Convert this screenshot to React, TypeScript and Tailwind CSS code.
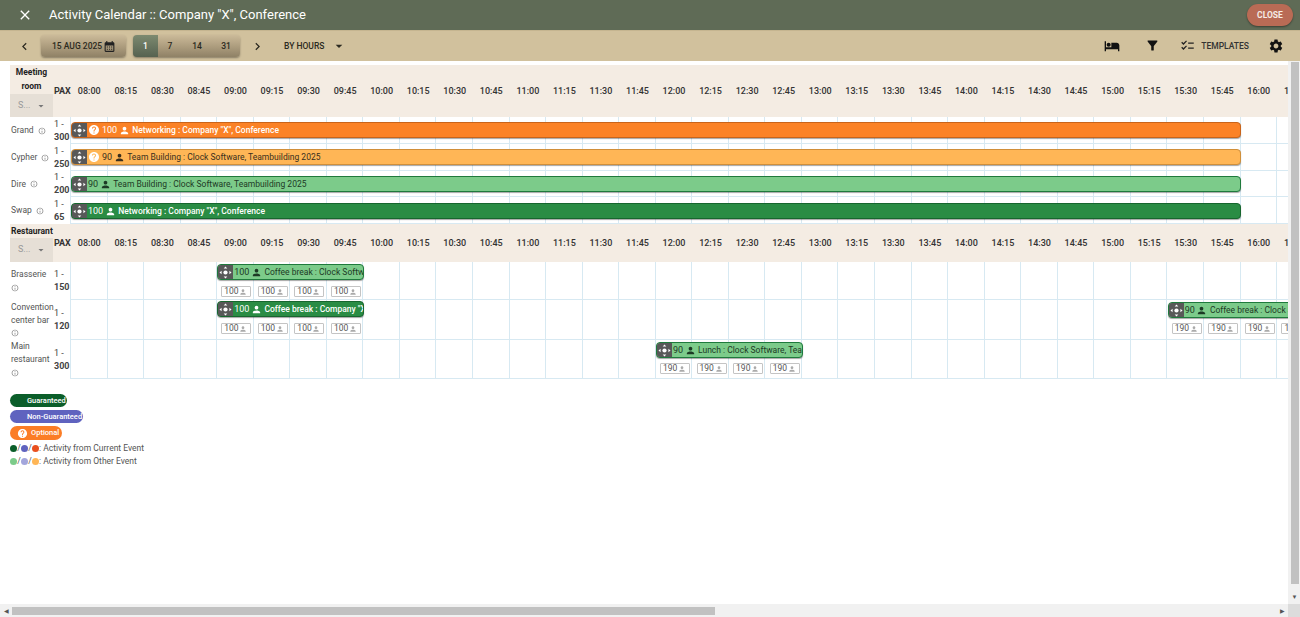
import React from 'react';
import {
  MdArrowDropDown,
  MdCalendarMonth,
  MdChecklist,
  MdChevronLeft,
  MdChevronRight,
  MdClose,
  MdFilterAlt,
  MdHelp,
  MdHotel,
  MdInfoOutline,
  MdPerson,
  MdSettings,
} from 'react-icons/md';

const SLOT = 36.56;
const times = Array.from({ length: 34 }, (_, i) => {
  const mins = 8 * 60 + i * 15;
  return `${String(Math.floor(mins / 60)).padStart(2, '0')}:${String(mins % 60).padStart(2, '0')}`;
});

type Bar = {
  start: number;
  span: number;
  top: number;
  pax: number;
  label: string;
  tone: 'orange' | 'amber' | 'light' | 'dark';
  optional?: boolean;
  boxes?: number;
  boxTop?: number;
};

type Room = { name: string; pax: string; height: string; bars: Bar[]; wrap?: boolean };

const meetingRooms: Room[] = [
  { name: 'Grand', pax: '300', height: 'h-[27px]', bars: [{ start: 0, span: 32, top: 5, pax: 100, label: 'Networking : Company "X", Conference', tone: 'orange', optional: true }] },
  { name: 'Cypher', pax: '250', height: 'h-[27px]', bars: [{ start: 0, span: 32, top: 5, pax: 90, label: 'Team Building : Clock Software, Teambuilding 2025', tone: 'amber', optional: true }] },
  { name: 'Dire', pax: '200', height: 'h-[26px]', bars: [{ start: 0, span: 32, top: 5, pax: 90, label: 'Team Building : Clock Software, Teambuilding 2025', tone: 'light' }] },
  { name: 'Swap', pax: '65', height: 'h-[27px]', bars: [{ start: 0, span: 32, top: 6, pax: 100, label: 'Networking : Company "X", Conference', tone: 'dark' }] },
];

const restaurants: Room[] = [
  { name: 'Brasserie', wrap: true, pax: '150', height: 'h-[38px]', bars: [{ start: 4, span: 4, top: 2, pax: 100, label: 'Coffee break : Clock Software, Teambuilding 2025', tone: 'light', boxes: 100, boxTop: 24 }] },
  {
    name: 'Convention center bar', wrap: true, pax: '120', height: 'h-[40px]',
    bars: [
      { start: 4, span: 4, top: 1, pax: 100, label: 'Coffee break : Company "X", Conference', tone: 'dark', boxes: 100, boxTop: 23 },
      { start: 30, span: 4, top: 2, pax: 90, label: 'Coffee break : Clock Software, Teambuilding 2025', tone: 'light', boxes: 190, boxTop: 23 },
    ],
  },
  { name: 'Main restaurant', wrap: true, pax: '300', height: 'h-[39px]', bars: [{ start: 16, span: 4, top: 2, pax: 90, label: 'Lunch : Clock Software, Teambuilding 2025', tone: 'light', boxes: 190, boxTop: 23 }] },
];

const tones = {
  orange: 'bg-[#fb8226] border-[#c9641a] text-white font-medium',
  amber: 'bg-[#ffb656] border-[#d08f3a] text-[#3a2f1d]',
  light: 'bg-[#7ccb8a] border-[#1f7a3c] text-[#1d3a25]',
  dark: 'bg-[#2a8c44] border-[#17662e] text-white font-medium',
};

function MoveIcon() {
  return (
    <svg viewBox="0 0 16 16" className="w-[13px] h-[13px]" fill="#fff">
      <circle cx="8" cy="8" r="2.6" />
      <path d="M8 0.6 10.2 3.2H5.8ZM8 15.4 5.8 12.8H10.2ZM0.6 8 3.2 5.8V10.2ZM15.4 8 12.8 10.2V5.8Z" />
    </svg>
  );
}

function EventBar({ bar }: { bar: Bar }) {
  return (
    <>
      <div
        className={`absolute z-10 h-[16px] flex items-center rounded-[4px] border overflow-hidden whitespace-nowrap text-[8.5px] shadow-[0_1px_1px_rgba(0,0,0,0.35)] ${tones[bar.tone]}`}
        style={{ left: bar.start * SLOT, width: bar.span * SLOT + 0.5, top: bar.top }}
      >
        <span className="w-[15px] h-full shrink-0 bg-[#585858] flex items-center justify-center">
          <MoveIcon />
        </span>
        {bar.optional && <MdHelp className="ml-[1px] w-[12px] h-[12px] shrink-0 text-white" />}
        <span className={`text-[9px] pt-[1px] font-normal ${bar.optional ? 'ml-[2px]' : 'ml-[1px]'}`}>{bar.pax}</span>
        <MdPerson className="mx-[1.5px] w-[11px] h-[11px] shrink-0" />
        <span className="ml-[1px]">{bar.label}</span>
      </div>
      {bar.boxes &&
        Array.from({ length: bar.span }, (_, i) => (
          <div
            key={i}
            className="absolute z-10 w-[30px] h-[11px] flex items-center justify-between pl-[2px] pr-[3px] bg-white border border-[#c4c4c4] rounded-[1px] text-[8.5px] leading-none text-[#555]"
            style={{ left: (bar.start + i) * SLOT + 4, top: bar.boxTop }}
          >
            <span>{bar.boxes}</span>
            <MdPerson className="w-[8px] h-[8px] text-[#aaa]" />
          </div>
        ))}
    </>
  );
}

function RoomRow({ room }: { room: Room }) {
  return (
    <div className={`flex ${room.height}`}>
      <div className="w-[43px] shrink-0 pl-[1px] text-[8.5px] leading-[13px] text-[#555] flex items-center">
        <div>
          {room.wrap ? (
            <>
              {room.name}
              <div className="leading-[13px]">
                <MdInfoOutline className="inline w-[8px] h-[8px] text-[#777]" />
              </div>
            </>
          ) : (
            <span className="flex items-center gap-[4px]">
              {room.name}
              <MdInfoOutline className="w-[8px] h-[8px] text-[#777]" />
            </span>
          )}
        </div>
      </div>
      <div className="w-[17px] shrink-0 pl-[1px] text-[9px] leading-[13px] text-[#444] flex flex-col justify-center">
        <div>1 -</div>
        <div className="font-bold">{room.pax}</div>
      </div>
      <div className="relative flex flex-1 border-b border-[#d7e9f2] border-l">
        {times.map((t) => (
          <div key={t} className="w-[36.56px] shrink-0 border-r border-[#d7e9f2]" />
        ))}
        {room.bars.map((bar) => (
          <EventBar key={bar.start} bar={bar} />
        ))}
      </div>
    </div>
  );
}

function HeaderRow({ title, tall }: { title: string; tall?: boolean }) {
  return (
    <div className={`flex bg-[#f4ece3] ${tall ? 'h-[52px]' : 'h-[38px]'}`}>
      <div className="w-[43px] shrink-0 flex flex-col justify-end">
        <div className={`text-[8.5px] font-bold text-[#222] ${tall ? 'text-center leading-[14px] mb-[1px]' : 'pl-[1px] leading-[14px]'}`}>{title}</div>
        <div className="h-[24px] bg-[#e6dfd6] flex items-center pl-[8px] gap-[5px] text-[9px] text-[#999]">
          <span>S...</span>
          <MdArrowDropDown className="w-[12px] h-[12px] text-[#777]" />
        </div>
      </div>
      <div className="w-[18px] shrink-0 self-center pl-[1px] pt-[1px] text-[9px] font-bold text-[#333]">PAX</div>
      <div className="flex">
        {times.map((t) => (
          <div key={t} className="w-[36.56px] shrink-0 self-center pt-[1px] text-center text-[9px] font-medium text-[#333]">
            {t}
          </div>
        ))}
      </div>
    </div>
  );
}

function Dots({ colors }: { colors: string[] }) {
  return (
    <span className="flex items-center">
      {colors.map((c, i) => (
        <React.Fragment key={c}>
          {i > 0 && <span className="w-[4px] text-center">/</span>}
          <span className={`w-[7px] h-[7px] rounded-full ${c}`} />
        </React.Fragment>
      ))}
    </span>
  );
}

export default function App() {
  return (
    <div className="w-[1300px] h-[617px] overflow-hidden flex flex-col bg-white font-['Roboto',sans-serif]">
      <div className="h-[30px] shrink-0 bg-[#5f6b56] flex items-center text-white">
        <MdClose className="ml-[17px] w-[16px] h-[16px]" />
        <div className="ml-[16px] text-[13px]">Activity Calendar :: Company "X", Conference</div>
        <button className="ml-auto mr-[7px] w-[46px] h-[22px] rounded-full bg-[#b96b55] text-[8.5px] font-bold text-[#f6ece6] shadow-[0_1px_2px_rgba(0,0,0,0.4)]">
          CLOSE
        </button>
      </div>
      <div className="h-[31px] shrink-0 bg-[#d1c19d] flex items-center text-[#2c2a20] border-t border-[#c5b590]">
        <MdChevronLeft className="ml-[17px] w-[15px] h-[15px]" />
        <div className="ml-[9px] w-[85px] h-[22px] rounded-[4px] bg-gradient-to-b from-[#cbba99] via-[#ae9e7f] to-[#8f8166] shadow-[0_1px_2px_rgba(0,0,0,0.35)] flex items-center pl-[11px] text-[8.5px] font-medium whitespace-nowrap">
          15 AUG 2025
          <MdCalendarMonth className="ml-[1px] w-[13px] h-[13px] text-[#222]" />
        </div>
        <div className="ml-[7px] flex h-[22px] rounded-[4px] overflow-hidden shadow-[0_1px_2px_rgba(0,0,0,0.35)] text-[8.5px] font-medium bg-gradient-to-b from-[#cbba99] via-[#ae9e7f] to-[#8f8166]">
          <div className="w-[25px] flex items-center justify-center text-white bg-gradient-to-b from-[#7d8a70] to-[#566250]">1</div>
          <div className="w-[24px] flex items-center justify-center">7</div>
          <div className="w-[30px] flex items-center justify-center">14</div>
          <div className="w-[28px] flex items-center justify-center">31</div>
        </div>
        <MdChevronRight className="ml-[10px] w-[15px] h-[15px]" />
        <div className="ml-[19px] text-[8.5px] font-medium">BY HOURS</div>
        <MdArrowDropDown className="ml-[7px] w-[16px] h-[16px]" />
        <MdHotel className="ml-auto mb-[1px] w-[16px] h-[16px] text-[#111]" />
        <MdFilterAlt className="ml-[25px] mb-[1px] w-[15px] h-[15px] text-[#111]" />
        <MdChecklist className="ml-[20px] mb-[1px] w-[15px] h-[15px] text-[#222]" />
        <span className="ml-[6px] text-[8.5px] font-medium text-[#333]">TEMPLATES</span>
        <MdSettings className="ml-[19px] mr-[16px] mb-[1px] w-[16px] h-[16px] text-[#111]" />
      </div>
      <div className="flex-1 flex min-h-0">
        <div className="flex-1 min-w-0 pl-[10px] pt-[4px] overflow-hidden">
          <HeaderRow title="Meeting room" tall />
          {meetingRooms.map((r) => (
            <RoomRow key={r.name} room={r} />
          ))}
          <HeaderRow title="Restaurant" />
          {restaurants.map((r) => (
            <RoomRow key={r.name} room={r} />
          ))}
          <div className="mt-[15px] flex flex-col items-start gap-[3px] text-[7.5px] font-medium text-white">
            <div className="w-[57px] h-[13px] rounded-full bg-[#0b5e2a] flex items-center pl-[17px]">Guaranteed</div>
            <div className="w-[73px] h-[13px] rounded-full bg-[#5f63bf] flex items-center pl-[17px] whitespace-nowrap">Non-Guaranteed</div>
            <div className="w-[52px] h-[14px] rounded-full bg-[#fb7d26] flex items-center pl-[7px] gap-[3px]">
              <MdHelp className="w-[11px] h-[11px]" />
              Optional
            </div>
          </div>
          <div className="mt-[2px] text-[8.5px] leading-[13px] text-[#555]">
            <div className="flex items-center">
              <Dots colors={['bg-[#0b5e2a]', 'bg-[#5f63bf]', 'bg-[#e9501f]']} />
              <span>: Activity from Current Event</span>
            </div>
            <div className="flex items-center">
              <Dots colors={['bg-[#7ccb8a]', 'bg-[#a3a6dc]', 'bg-[#ffb656]']} />
              <span>: Activity from Other Event</span>
            </div>
          </div>
        </div>
        <div className="w-[12px] shrink-0 bg-[#f1f1f1] flex flex-col items-center pl-[1px]">
          <div className="w-[8px] h-[522px] mt-[1px] bg-[#c1c1c1]" />
          <span className="mt-auto mb-[1px] text-[6px] leading-[12px] text-[#555]">▼</span>
        </div>
      </div>
      <div className="h-[13px] shrink-0 bg-[#f1f1f1] flex items-center">
        <span className="w-[12px] flex justify-center text-[6px] text-[#555]">◀</span>
        <div className="w-[703px] h-[8px] bg-[#c1c1c1]" />
        <span className="ml-auto w-[12px] flex justify-center text-[6px] text-[#555]">▶</span>
        <div className="w-[12px] h-full bg-[#dcdcdc]" />
      </div>
    </div>
  );
}
